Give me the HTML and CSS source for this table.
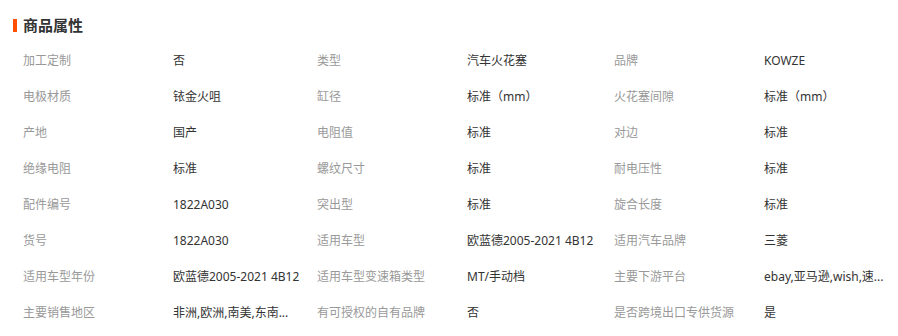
FILE: index.html
```html
<!DOCTYPE html>
<html lang="zh-CN">
<head>
<meta charset="utf-8">
<title>商品属性</title>
<link rel="stylesheet" href="styles.css">
</head>
<body>
<div class="attrs">
  <h2 class="attrs-title"><span class="bar"></span>商品属性</h2>
  <div class="grid">
    <div class="k">加工定制</div><div class="v">否</div>
    <div class="k">类型</div><div class="v">汽车火花塞</div>
    <div class="k">品牌</div><div class="v">KOWZE</div>

    <div class="k">电极材质</div><div class="v">铱金火咀</div>
    <div class="k">缸径</div><div class="v">标准（mm）</div>
    <div class="k">火花塞间隙</div><div class="v">标准（mm）</div>

    <div class="k">产地</div><div class="v">国产</div>
    <div class="k">电阻值</div><div class="v">标准</div>
    <div class="k">对边</div><div class="v">标准</div>

    <div class="k">绝缘电阻</div><div class="v">标准</div>
    <div class="k">螺纹尺寸</div><div class="v">标准</div>
    <div class="k">耐电压性</div><div class="v">标准</div>

    <div class="k">配件编号</div><div class="v">1822A030</div>
    <div class="k">突出型</div><div class="v">标准</div>
    <div class="k">旋合长度</div><div class="v">标准</div>

    <div class="k">货号</div><div class="v">1822A030</div>
    <div class="k">适用车型</div><div class="v">欧蓝德2005-2021 4B12</div>
    <div class="k">适用汽车品牌</div><div class="v">三菱</div>

    <div class="k">适用车型年份</div><div class="v">欧蓝德2005-2021 4B12</div>
    <div class="k">适用车型变速箱类型</div><div class="v">MT/手动档</div>
    <div class="k">主要下游平台</div><div class="v">ebay,亚马逊,wish,速...</div>

    <div class="k">主要销售地区</div><div class="v">非洲,欧洲,南美,东南...</div>
    <div class="k">有可授权的自有品牌</div><div class="v">否</div>
    <div class="k">是否跨境出口专供货源</div><div class="v">是</div>
  </div>
</div>
</body>
</html>
```

FILE: styles.css
```css
html, body {
  margin: 0;
  padding: 0;
  background: #fff;
}
body {
  font-family: "Noto Sans", "Noto Sans CJK SC", sans-serif;
  color: #333;
}
.attrs {
  width: 898px;
  height: 336px;
  overflow: hidden;
}
.attrs-title {
  margin: 15px 0 0 0;
  padding-left: 13px;
  height: 20px;
  display: flex;
  align-items: center;
  gap: 6px;
  font-size: 15px;
  line-height: 20px;
  font-weight: 700;
  color: #333;
  font-family: "Noto Sans CJK SC", sans-serif;
}
.bar {
  width: 4px;
  height: 13px;
  background: #ff5000;
}
.grid {
  margin-top: 8px;
  padding-left: 23px;
  display: grid;
  grid-template-columns: 150px 144px 150px 147px 150px 1fr;
  grid-auto-rows: 36px;
  font-size: 12px;
  line-height: 36px;
}
.k {
  color: #999;
  white-space: nowrap;
}
.v {
  color: #333;
  white-space: nowrap;
}
```
